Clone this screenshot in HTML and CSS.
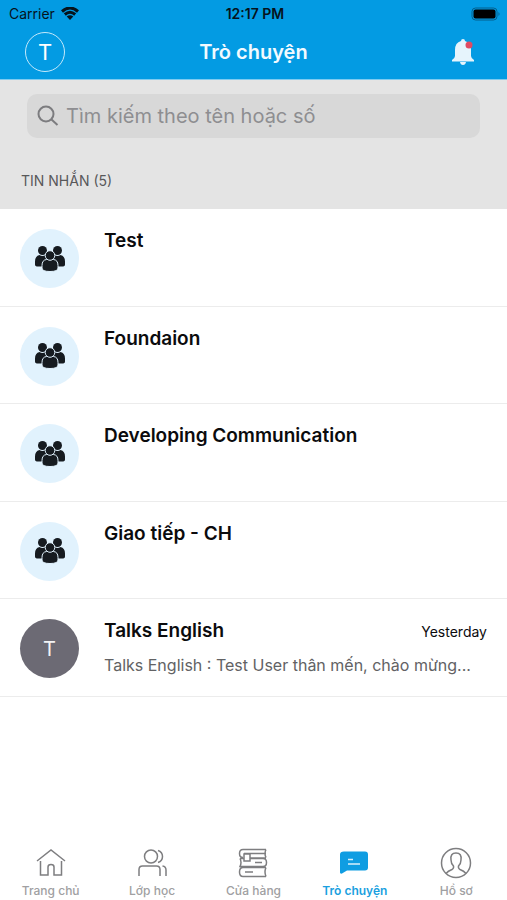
FILE: index.html
```html
<!DOCTYPE html>
<html lang="vi">
<head>
<meta charset="utf-8">
<meta name="viewport" content="width=device-width, initial-scale=1">
<title>Trò chuyện</title>
<link rel="stylesheet" href="styles.css">
</head>
<body>
<svg class="defs" aria-hidden="true">
  <symbol id="group" viewBox="0 0 30 26">
    <circle cx="7.500" cy="4.500" r="4.500"/>
    <circle cx="22.500" cy="4.500" r="4.500"/>
    <path d="M0 18.500V15.500q0-5.500 4.500-6.500 3 2 6 0 3.500 1 3.500 4v7.500H3q-3 0-3-2zM30 18.500V15.500q0-5.500-4.500-6.500-3 2-6 0-3.500 1-3.500 4v7.500h11q3 0 3-2z"/>
    <path class="cut" d="M7 22V19.500q0-5.500 4.500-6h7q4.500.5 4.500 6V22q0 3.500-8 3.500T7 22z"/>
    <circle class="cut" cx="15" cy="9.500" r="4.800"/>
  </symbol>
</svg>
<div class="app">
  <header class="header">
    <div class="status">
      <span class="carrier">Carrier
        <svg class="wifi" viewBox="0 0 18 13"><path d="M1 4.500q8-7 16 0M3.800 7.500q5.200-4.400 10.400 0"/><path class="solid" d="M9 13l-3.300-3.400q3.300-2.600 6.600 0z"/></svg>
      </span>
      <time class="clock">12:17 PM</time>
      <svg class="battery" viewBox="0 0 30 14"><rect class="case" x="1" y="1" width="25" height="12" rx="3.500"/><rect x="2.500" y="2.500" width="22" height="9" rx="2"/><path class="tip" d="M27.500 5q2 2 0 4z"/></svg>
    </div>
    <div class="bar">
      <button class="me" type="button" aria-label="Tài khoản">T</button>
      <h1>Trò chuyện</h1>
      <button class="bell" type="button" aria-label="Thông báo">
        <svg viewBox="0 0 24 28"><path d="M10 3q0-2 2-2t2 2q6 1.500 6 9v6q0 2 3 4v1.500H1V22q3-2 3-4v-6q0-7.500 6-9zM9 24h6q-.5 3-3 3t-3-3z"/><circle cx="18" cy="7" r="3.500"/></svg>
      </button>
    </div>
  </header>
  <main>
    <section class="top">
      <label class="search">
        <svg viewBox="0 0 22 22"><circle cx="9" cy="9" r="7.500"/><path d="M14.500 14.500l6 5.500"/></svg>
        <input type="search" placeholder="Tìm kiếm theo tên hoặc số" aria-label="Tìm kiếm">
      </label>
      <h2>TIN NHẮN (5)</h2>
    </section>
    <ul class="list">
      <li><a class="chat" href="#c1"><span class="avatar"><svg><use href="#group"/></svg></span><span class="body"><strong>Test</strong></span></a></li>
      <li><a class="chat" href="#c2"><span class="avatar"><svg><use href="#group"/></svg></span><span class="body"><strong>Foundaion</strong></span></a></li>
      <li><a class="chat" href="#c3"><span class="avatar"><svg><use href="#group"/></svg></span><span class="body"><strong>Developing Communication</strong></span></a></li>
      <li><a class="chat" href="#c4"><span class="avatar"><svg><use href="#group"/></svg></span><span class="body"><strong>Giao tiếp - CH</strong></span></a></li>
      <li><a class="chat" href="#c5"><span class="avatar letter">T</span><span class="body"><span class="line"><strong>Talks English</strong><time>Yesterday</time></span><span class="preview">Talks English : Test User thân mến, chào mừng...</span></span></a></li>
    </ul>
  </main>
  <nav class="tabs">
    <a href="#home"><svg viewBox="0 0 32 32"><path d="M2 14L16 3l14 11M5.500 14v14H13V20q0-2.500 3-2.500t3 2.500v8h7.500V14"/></svg>Trang chủ</a>
    <a href="#class"><svg viewBox="0 0 32 32"><circle cx="15" cy="9.500" r="6.500"/><path d="M22 3.500q4.500 1.500 4.500 6t-4.500 6M3 29v-6.500q0-3.500 3.500-3.500h14q3.500 0 3.500 3.500V29M26.500 19q3.500.5 3.500 4V29"/></svg>Lớp học</a>
    <a href="#shop"><svg viewBox="0 0 32 32"><path d="M29 2.500H6q-3.500 0-3.500 4t3.500 4M13 11h16M29 2.500q-2 4 0 8M7 6.500h22M7 7h6v7H7zM3 11.500h4M13 11.500h13q3.500 0 3.500 4t-3.500 4H3q2-4 0-8M18 15.500h7M29 20.500H6q-3.500 0-3.500 4.500t3.500 4.500h23M29 20.500q-2 4.500 0 9M8 25h8"/></svg>Cửa hàng</a>
    <a class="active" href="#chat" aria-current="page"><svg viewBox="0 0 32 32"><path class="bubble" d="M5 4.500h21q3 0 3 3v13q0 3-3 3H8l-5 3q-2 .5-2-1V7.500q0-3 4-3z"/><path class="mark" d="M9 12.500h5M9 17h12"/></svg>Trò chuyện</a>
    <a href="#profile"><svg viewBox="0 0 32 32"><circle cx="16" cy="16" r="14.500"/><path d="M6 26.500q2-2.500 6-4 2-1 1.500-3.500Q11 16.500 11 13q-1-7 5-7t5 7q0 3.500-2.500 6-.5 2.500 1.500 3.500 4 1.500 6 4"/></svg>Hồ sơ</a>
  </nav>
</div>
</body>
</html>
```
FILE: styles.css
```css
* { box-sizing: border-box; }
body {
  margin: 0;
  background: #fff;
  color: #0b0b0d;
  font-family: Inter, "Noto Sans", sans-serif;
}
a { color: inherit; text-decoration: none; }
button { padding: 0; border: 0; background: none; font: inherit; color: #fff; }
h1, h2 { margin: 0; }
.defs { position: absolute; width: 0; height: 0; }
.app { display: flex; flex-direction: column; min-height: 100vh; }

.header { background: #039be3; border-bottom: 1px solid #7fcbf0; }
.status {
  display: grid;
  grid-template-columns: 1fr auto 1fr;
  align-items: center;
  height: 27px;
  padding: 0 6px 0 9px;
  font-size: 14px;
  color: #06131c;
}
.carrier { display: flex; align-items: center; gap: 6px; }
.clock { font-weight: 600; }
.wifi { width: 18px; height: 13px; fill: none; stroke: #06131c; stroke-width: 3; }
.wifi .solid { fill: #06131c; stroke: none; }
.battery { width: 30px; height: 14px; justify-self: end; fill: #000; }
.battery .case { fill: none; stroke: #045f8c; stroke-width: 1; }
.battery .tip { fill: #045f8c; }
.bar {
  display: grid;
  grid-template-columns: 1fr auto 1fr;
  align-items: center;
  height: 52px;
  padding: 0 25px 2px;
}
.bar h1 { font-size: 20px; font-weight: 600; line-height: 24px; color: #f2faff; }
.me {
  width: 40px;
  height: 40px;
  border: 1px solid #c5e9fb;
  border-radius: 50%;
  font-size: 22px;
}
.bell { justify-self: end; width: 24px; height: 28px; margin-right: 7px; }
.bell svg { display: block; fill: #e6f4fc; }
.bell circle { fill: #e04a62; }

.top { padding: 14px 27px 0; height: 129px; background: #e4e4e4; }
.search {
  display: flex;
  align-items: center;
  gap: 7px;
  height: 44px;
  padding: 0 10px;
  border-radius: 10px;
  background: #d8d8d8;
}
.search svg { flex: none; width: 22px; height: 22px; fill: none; stroke: #7c7c7f; stroke-width: 2; }
.search input {
  flex: 1;
  min-width: 0;
  padding: 0;
  border: 0;
  outline: 0;
  background: none;
  font: 20px Inter, "Noto Sans", sans-serif;
}
.search input::placeholder { color: #8e8e91; opacity: 1; }
.top h2 { margin: 33px 0 0 -6px; font-size: 14px; line-height: 20px; font-weight: 400; color: #58585a; }

.list {
  display: grid;
  grid-auto-rows: 1fr;
  min-height: 488px;
  margin: 0;
  padding: 0;
  list-style: none;
}
.list li { border-bottom: 1px solid #ececec; }
.chat { display: flex; gap: 25px; padding: 20px 20px 0; }
.avatar {
  display: grid;
  place-items: center;
  flex: none;
  width: 59px;
  height: 59px;
  border-radius: 50%;
  background: #e1f2fd;
}
.avatar svg { width: 30px; height: 26px; fill: #161b20; }
.cut { stroke: #e1f2fd; stroke-width: 1; }
.letter { background: #6c6a74; color: #f3f3f5; font-size: 20px; }
.body { flex: 1; min-width: 0; }
.body strong { font-size: 19px; line-height: 24px; font-weight: 600; }
.line { display: flex; align-items: center; justify-content: space-between; }
.line time { font-size: 14px; }
.preview {
  display: block;
  margin-top: 10px;
  overflow: hidden;
  font-size: 16px;
  line-height: 24px;
  white-space: nowrap;
  text-overflow: ellipsis;
  color: #626264;
}

.tabs { display: grid; grid-template-columns: repeat(5, 1fr); margin-top: auto; padding-bottom: 1px; }
.tabs a {
  display: flex;
  flex-direction: column;
  align-items: center;
  gap: 4px;
  font-size: 12px;
  line-height: 16px;
  font-weight: 500;
  color: #a0a0a2;
}
.tabs svg { width: 32px; height: 32px; fill: none; stroke: #7e7e80; stroke-width: 1.5; }
.tabs .active { font-weight: 600; color: #1a9fe0; }
.tabs .bubble { fill: #0f9de2; stroke: none; }
.tabs .mark { stroke: #d9f0fc; }
```
